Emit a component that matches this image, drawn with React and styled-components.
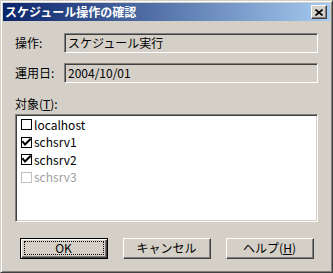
import React from "react";
import styled, { createGlobalStyle } from "styled-components";

const Global = createGlobalStyle`
  html, body { margin: 0; padding: 0; background: #d4d0c8; }
  * { box-sizing: border-box; }
  body { font-family: "Noto Sans CJK JP", "Noto Sans", sans-serif; font-size: 12px; }
`;

const Window = styled.div`
  width: 333px;
  height: 273px;
  border-style: solid;
  border-width: 1px;
  border-color: #d4d0c8 #404040 #404040 #d4d0c8;
  box-shadow: inset 1px 1px #ffffff, inset -1px -1px #808080;
  padding: 2px;
  background: #d4d0c8;
  display: flex;
  flex-direction: column;
`;

const TitleBar = styled.div`
  height: 18px;
  flex: none;
  display: flex;
  align-items: center;
  justify-content: space-between;
  padding: 0 2px 0 2px;
  background: linear-gradient(to right, #0a246a, #a6caf0);
`;

const Title = styled.span`
  color: #fff;
  font-weight: bold;
  font-size: 12px;
  line-height: 18px;
`;

const CloseButton = styled.div`
  width: 16px;
  height: 14px;
  background: #d4d0c8;
  border-style: solid;
  border-width: 1px;
  border-color: #ffffff #404040 #404040 #ffffff;
  box-shadow: inset -1px -1px #808080;
  display: flex;
  align-items: center;
  justify-content: center;
  margin-right: 1px;
`;

const Body = styled.div`
  flex: 1;
  display: flex;
  flex-direction: column;
  padding: 12px 12px 11px 12px;
`;

const FieldRow = styled.div`
  display: flex;
  align-items: center;
  height: 20px;
  margin-top: ${(p) => p.$gap || 0}px;
`;

const Label = styled.span`
  width: 49px;
  flex: none;
  color: #000;
  font-size: 12px;
  line-height: 16px;
`;

const Field = styled.div`
  flex: 1;
  height: 20px;
  background: #d4d0c8;
  border-style: solid;
  border-width: 1px;
  border-color: #808080 #ffffff #ffffff #808080;
  box-shadow: inset 1px 1px #404040, inset -1px -1px #d4d0c8;
  padding-left: 3px;
  font-size: 12px;
  line-height: 18px;
  color: #000;
  white-space: nowrap;
`;

const GroupLabel = styled.div`
  margin-top: 13px;
  height: 16px;
  line-height: 16px;
  font-size: 12px;
  color: #000;
  margin-bottom: 2px;
`;

const U = styled.span`
  text-decoration: underline;
`;

const List = styled.div`
  height: 108px;
  background: #fff;
  border-style: solid;
  border-width: 1px;
  border-color: #808080 #ffffff #ffffff #808080;
  box-shadow: inset 1px 1px #404040, inset -1px -1px #d4d0c8;
  padding: 1px 1px 1px 5px;
  display: flex;
  flex-direction: column;
`;

const Item = styled.div`
  height: 17.5px;
  display: flex;
  align-items: center;
  gap: 2px;
  color: ${(p) => (p.$disabled ? "#a0a0a0" : "#000")};
  font-size: 12px;
  line-height: 14px;
`;

const Box = styled.span`
  width: 11px;
  height: 11px;
  flex: none;
  border: 1px solid ${(p) => (p.$disabled ? "#c0c0c0" : "#000")};
  background: #fff;
  display: flex;
  align-items: center;
  justify-content: center;
`;

const ButtonRow = styled.div`
  margin-top: 16px;
  display: flex;
  justify-content: center;
  gap: 15px;
`;

const Button = styled.div`
  position: relative;
  width: 88px;
  height: 21px;
  background: #d4d0c8;
  border-style: solid;
  border-width: 1px;
  border-color: ${(p) => (p.$default ? "#000 #000 #000 #000" : "#ffffff #404040 #404040 #ffffff")};
  box-shadow: ${(p) =>
    p.$default
      ? "inset 1px 1px #ffffff, inset -1px -1px #404040, inset -2px -2px #808080"
      : "inset -1px -1px #808080"};
  display: flex;
  align-items: center;
  justify-content: center;
  font-size: 12px;
  line-height: 14px;
  color: #000;
  padding-bottom: 1px;
  &::after {
    content: "";
    display: ${(p) => (p.$default ? "block" : "none")};
    position: absolute;
    left: 3px;
    right: 3px;
    top: 2px;
    bottom: 3px;
    border: 1px dotted #000;
  }
`;

const Check = () => (
  <svg width="9" height="9" viewBox="0 0 9 9">
    <path d="M1 4 L3 6.5 L8 1.5" stroke="#000" strokeWidth="2" fill="none" strokeLinecap="square" />
  </svg>
);

const items = [
  { name: "localhost", checked: false },
  { name: "schsrv1", checked: true },
  { name: "schsrv2", checked: true },
  { name: "schsrv3", checked: false, disabled: true },
];

export default function App() {
  return (
    <>
      <Global />
      <Window>
        <TitleBar>
          <Title>スケジュール操作の確認</Title>
          <CloseButton>
            <svg width="8" height="7" viewBox="0 0 8 7">
              <path d="M0.5 0.5 L7.5 6.5 M7.5 0.5 L0.5 6.5" stroke="#000" strokeWidth="1.6" />
            </svg>
          </CloseButton>
        </TitleBar>
        <Body>
          <FieldRow>
            <Label>操作:</Label>
            <Field>スケジュール実行</Field>
          </FieldRow>
          <FieldRow $gap={10}>
            <Label>運用日:</Label>
            <Field>2004/10/01</Field>
          </FieldRow>
          <GroupLabel>
            対象(<U>T</U>):
          </GroupLabel>
          <List>
            {items.map((it) => (
              <Item key={it.name} $disabled={it.disabled}>
                <Box $disabled={it.disabled}>{it.checked && <Check />}</Box>
                {it.name}
              </Item>
            ))}
          </List>
          <ButtonRow>
            <Button $default>OK</Button>
            <Button>キャンセル</Button>
            <Button>
              ヘルプ(<U>H</U>)
            </Button>
          </ButtonRow>
        </Body>
      </Window>
    </>
  );
}
